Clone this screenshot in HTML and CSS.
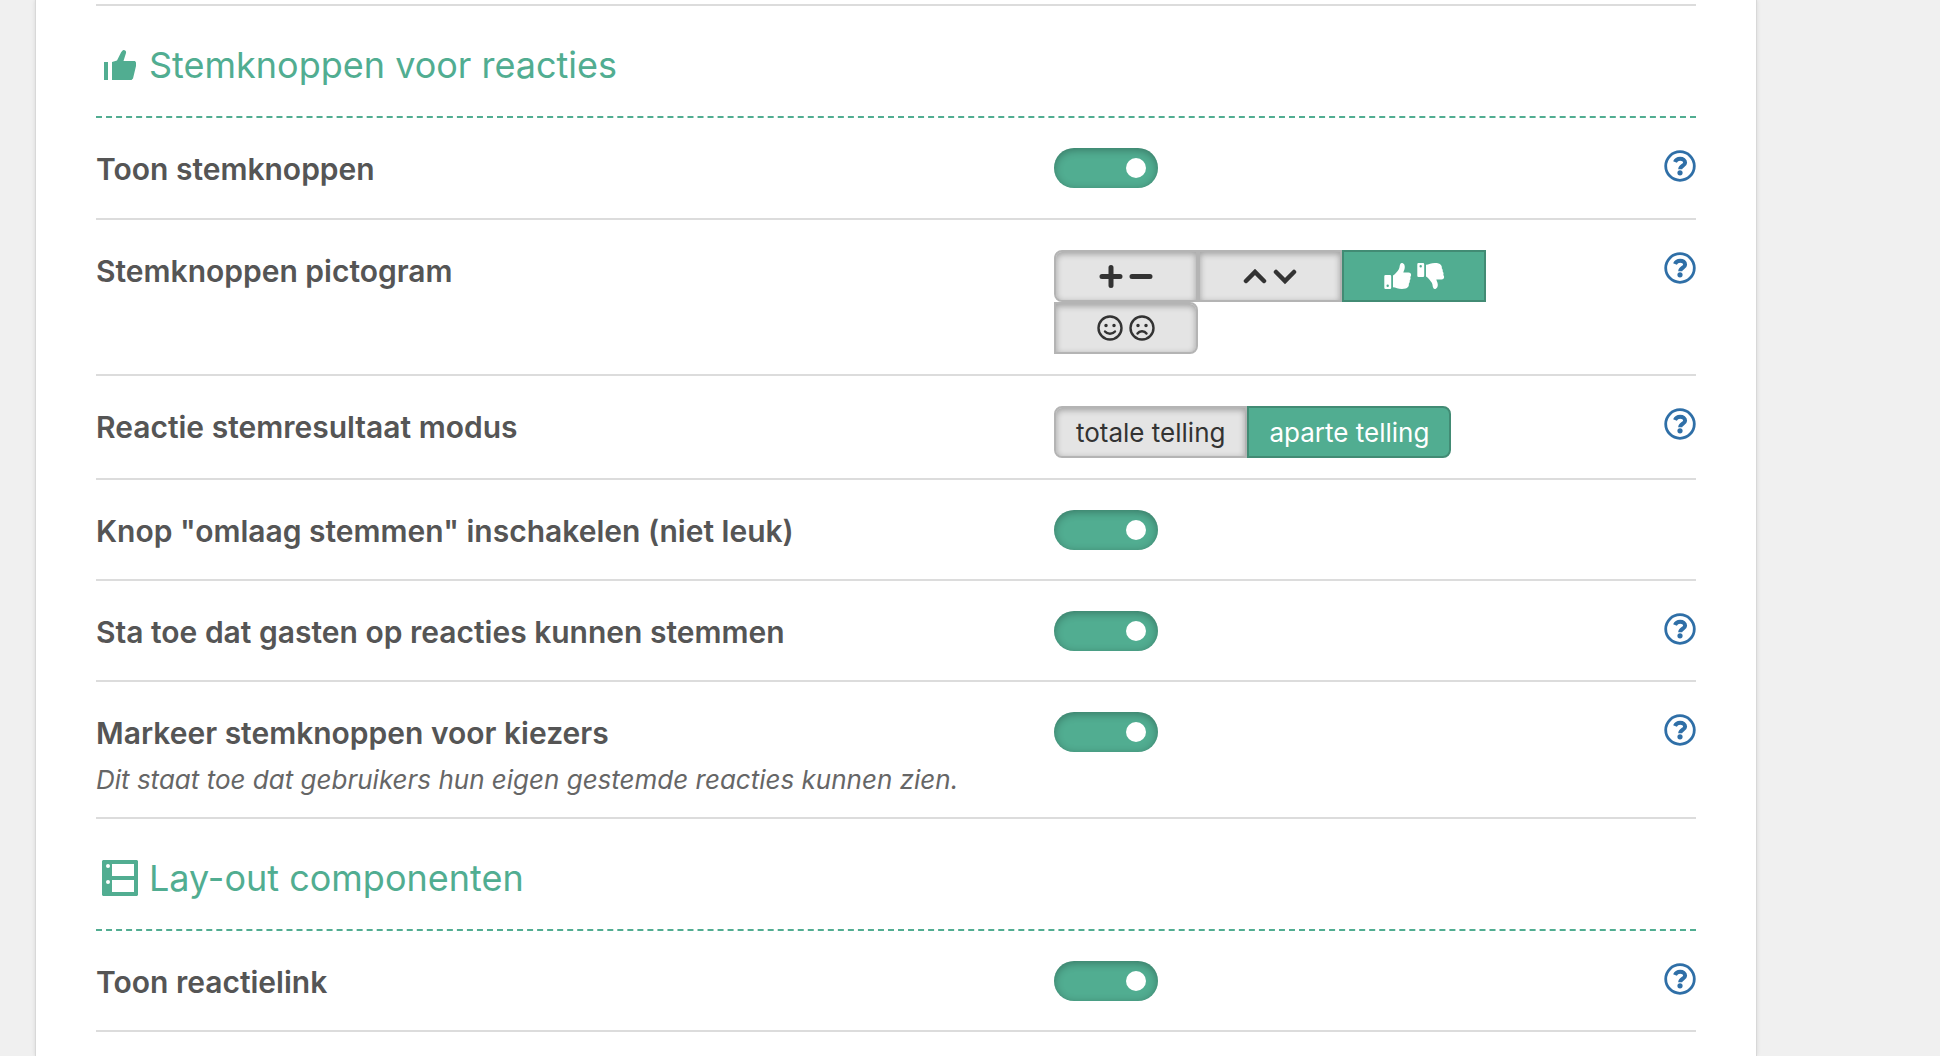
FILE: index.html
```html
<!DOCTYPE html>
<html lang="nl">

<head>
    <meta charset="UTF-8">
    <meta name="viewport" content="width=device-width, initial-scale=1.0">
    <title>Reactie instellingen</title>
    <link rel="stylesheet" href="styles.css">
</head>

<body>

    <!-- pictogrammen -->
    <svg class="sprite" aria-hidden="true">
        <symbol id="icon-help" viewBox="0 0 32 32">
            <circle cx="16" cy="16" r="14.3" fill="none" stroke="currentColor" stroke-width="2.8" />
            <path d="M11 12c1-2.5 2.9-3.3 5.1-3.3 2.8 0 5 1.4 5 4 0 3.2-4.9 3-4.9 6.5" fill="none" stroke="currentColor" stroke-width="4" />
            <circle cx="16" cy="22.8" r="2.6" fill="currentColor" />
        </symbol>
        <symbol id="icon-thumb-up" viewBox="0 0 28 28">
            <path fill-rule="evenodd" d="M1.5 13h4.500a1.2 1.2 0 0 1 1.2 1.2v11.600a1.2 1.2 0 0 1-1.2 1.2H1.500a1.2 1.2 0 0 1-1.2-1.2V14.200A1.2 1.2 0 0 1 1.5 13zM3.7 22.600a1.2 1.2 0 1 0 0 2.400 1.2 1.2 0 0 0 0-2.400z" fill="currentColor" />
            <path d="M9 13.5c2.5-1.5 4.5-4.2 5.8-6.3 1-1.7.6-3.2 1.4-4.9.5-1.2 1.5-1.6 2.7-1 2.2 1.1 2.2 4 1.5 6.2-.4 1.2-.9 2-1.1 3h5.2c1.7 0 2.8 1.3 2.6 2.8-.1.8-.4 1.3-.8 1.7.5 1.5.2 2.7-.6 3.5.2 1.3-.1 2.4-.9 3.2.2 1.4-.1 2.6-.9 3.4-1.1 1.4-3 1.9-6 1.9-3.7 0-6.3-1.6-8.9-1.8z" fill="currentColor" />
        </symbol>
    </svg>

    <div class="panel">

        <!-- stemknoppen -->
        <h2 class="section-title">
            <svg class="section-icon" viewBox="0 0 36 36" aria-hidden="true">
                <path d="M2 15h4v18H2zM10 15l5-1.5L19 5.5Q20.5 2.5 22 3q2.5.5 2 3L21.5 14H33l1 1.5v3.5L31 31.5 29.5 33H10z" fill="currentColor" />
            </svg>
            Stemknoppen voor reacties
        </h2>

        <div class="option">
            <label class="option-name" for="showVote">Toon stemknoppen</label>
            <div class="option-input"><input class="toggle" type="checkbox" id="showVote" checked></div>
            <a class="help" href="#" aria-label="Help"><svg><use href="#icon-help" /></svg></a>
        </div>

        <div class="option">
            <div class="option-name" id="iconLabel">Stemknoppen pictogram</div>
            <div class="option-input switch-field" role="radiogroup" aria-labelledby="iconLabel">
                <input type="radio" name="voteIcon" id="iconPlus" aria-label="Plus en min">
                <label class="switch-icon" for="iconPlus">
                    <svg class="pair" viewBox="0 0 58 28">
                        <path d="M5 14.5h18M14 5.5v18M35 14.5h18" class="line thick" />
                    </svg>
                </label>
                <input type="radio" name="voteIcon" id="iconChevron" aria-label="Pijlen">
                <label class="switch-icon" for="iconChevron">
                    <svg class="pair" viewBox="0 0 58 28">
                        <path d="M5 19l9-9 9 9M35 10l9 9 9-9" class="line chevron" />
                    </svg>
                </label>
                <input type="radio" name="voteIcon" id="iconThumb" aria-label="Duimen" checked>
                <label class="switch-icon" for="iconThumb">
                    <svg class="thumb"><use href="#icon-thumb-up" /></svg>
                    <svg class="thumb down"><use href="#icon-thumb-up" /></svg>
                </label>
                <input type="radio" name="voteIcon" id="iconSmile" aria-label="Gezichten">
                <label class="switch-icon" for="iconSmile">
                    <svg class="pair" viewBox="0 0 58 28">
                        <circle cx="13" cy="14" r="11.5" class="line" />
                        <circle cx="45" cy="14" r="11.5" class="line" />
                        <path d="M8 17.5c2.5 3 7.5 3 10 0M40.5 19.5c2-3 7-3 9 0" class="line" />
                        <path d="M9 11.5h0M17 11.5h0M41 11.5h0M49 11.5h0" class="line eyes" />
                    </svg>
                </label>
            </div>
            <a class="help" href="#" aria-label="Help"><svg><use href="#icon-help" /></svg></a>
        </div>

        <div class="option">
            <div class="option-name" id="modeLabel">Reactie stemresultaat modus</div>
            <div class="option-input switch-field" role="radiogroup" aria-labelledby="modeLabel">
                <input type="radio" name="voteMode" id="modeTotal">
                <label for="modeTotal">totale telling</label>
                <input type="radio" name="voteMode" id="modeSeparate" checked>
                <label for="modeSeparate">aparte telling</label>
            </div>
            <a class="help" href="#" aria-label="Help"><svg><use href="#icon-help" /></svg></a>
        </div>

        <div class="option">
            <label class="option-name" for="downVote">Knop "omlaag stemmen" inschakelen (niet leuk)</label>
            <div class="option-input"><input class="toggle" type="checkbox" id="downVote" checked></div>
        </div>

        <div class="option">
            <label class="option-name" for="guestVote">Sta toe dat gasten op reacties kunnen stemmen</label>
            <div class="option-input"><input class="toggle" type="checkbox" id="guestVote" checked></div>
            <a class="help" href="#" aria-label="Help"><svg><use href="#icon-help" /></svg></a>
        </div>

        <div class="option">
            <div>
                <label class="option-name" for="highlightVote">Markeer stemknoppen voor kiezers</label>
                <p class="option-desc">Dit staat toe dat gebruikers hun eigen gestemde reacties kunnen zien.</p>
            </div>
            <div class="option-input"><input class="toggle" type="checkbox" id="highlightVote" checked></div>
            <a class="help" href="#" aria-label="Help"><svg><use href="#icon-help" /></svg></a>
        </div>

        <!-- lay-out -->
        <h2 class="section-title">
            <svg class="section-icon" viewBox="0 0 36 36" aria-hidden="true">
                <path fill-rule="evenodd" d="M1 0h34l1 1v34l-1 1H1l-1-1V1zM10 4v12h22V4zM10 20v12h22V20zM6 4a2 2 0 1 0 0 4 2 2 0 0 0 0-4zM6 20a2 2 0 1 0 0 4 2 2 0 0 0 0-4z" fill="currentColor" />
            </svg>
            Lay-out componenten
        </h2>

        <div class="option">
            <label class="option-name" for="replyLink">Toon reactielink</label>
            <div class="option-input"><input class="toggle" type="checkbox" id="replyLink" checked></div>
            <a class="help" href="#" aria-label="Help"><svg><use href="#icon-help" /></svg></a>
        </div>
    </div>

</body>

</html>
```

FILE: styles.css
```css
* {
    box-sizing: border-box;
}

body {
    margin: 0;
    background-color: #f0f0f0;
    color: #555;
    font-family: Inter, "Liberation Sans", sans-serif;
}

.sprite {
    display: none;
}

.panel {
    min-height: 100vh;
    margin: 0 183px 0 35px;
    padding: 4px 60px 0;
    background-color: #fff;
    border: 1px solid #d8d8d8;
    border-width: 0 1px;
    box-shadow: 0 0 4px rgba(0, 0, 0, 0.1);
}

/* sectietitel */
.section-title {
    display: flex;
    align-items: center;
    gap: 11px;
    height: 112px;
    margin: 0;
    padding: 8px 6px 0;
    border-bottom: 2px dashed #51ad91;
    color: #51ad91;
    font-size: 36px;
    font-weight: 400;
}

.section-title:first-child {
    height: 114px;
    border-top: 2px solid #dcdcdc;
}

.section-icon {
    width: 36px;
    height: 36px;
}

/* optierij */
.option {
    display: grid;
    grid-template-columns: minmax(0, 1fr) 530px 112px;
    align-items: start;
    min-height: 101px;
    padding: 30px 0 20px;
    border-bottom: 2px solid #dcdcdc;
}

.section-title:first-child + .option {
    min-height: 102px;
}

.option-name {
    display: block;
    font-size: 30px;
    font-weight: 600;
    line-height: 42px;
}

.option-desc {
    margin: 8px 0 0;
    color: #666;
    font-size: 26px;
    font-style: italic;
    line-height: 35px;
}

.help {
    justify-self: end;
    margin-top: 2px;
    color: #2f6fa7;
}

.help svg {
    display: block;
    width: 32px;
    height: 32px;
}

/* schakelaar */
.toggle {
    display: block;
    appearance: none;
    width: 104px;
    height: 40px;
    margin: 0;
    padding: 10px 12px;
    border-radius: 20px;
    background-color: #51ad91;
    box-shadow: inset 0 2px 8px rgba(0, 0, 0, 0.3);
    cursor: pointer;
}

.toggle::before {
    content: "";
    display: block;
    width: 20px;
    height: 20px;
    border-radius: 50%;
    background-color: #fff;
}

.toggle:checked::before {
    margin-left: auto;
}

/* keuzeknoppen */
.switch-field {
    display: flex;
    flex-wrap: wrap;
    position: relative;
    padding-right: 90px;
}

.switch-field input {
    position: absolute;
    opacity: 0;
}

.switch-field label {
    display: flex;
    align-items: center;
    justify-content: center;
    height: 52px;
    padding: 0 20px;
    border: 2px solid #b4b4b4;
    background-color: #e4e4e4;
    box-shadow: inset 0 2px 6px rgba(0, 0, 0, 0.3);
    color: #333;
    font-size: 26px;
    cursor: pointer;
}

.switch-field .switch-icon {
    gap: 5px;
    width: 144px;
}

.switch-field label:first-of-type {
    border-radius: 8px 0 0 8px;
}

.switch-field label:last-of-type {
    border-radius: 0 8px 8px 0;
}

.switch-field input:checked + label {
    border-color: #428b74;
    background-color: #51ad91;
    box-shadow: none;
    color: #fff;
}

.pair {
    width: 58px;
    height: 28px;
}

.thumb {
    width: 28px;
    height: 28px;
}

.thumb.down {
    transform: scaleY(-1);
}

.line {
    fill: none;
    stroke: currentColor;
    stroke-width: 2.4;
    stroke-linecap: round;
}

.thick {
    stroke-width: 5;
}

.chevron {
    stroke-width: 4.5;
}

.eyes {
    stroke-width: 3.5;
}
```
